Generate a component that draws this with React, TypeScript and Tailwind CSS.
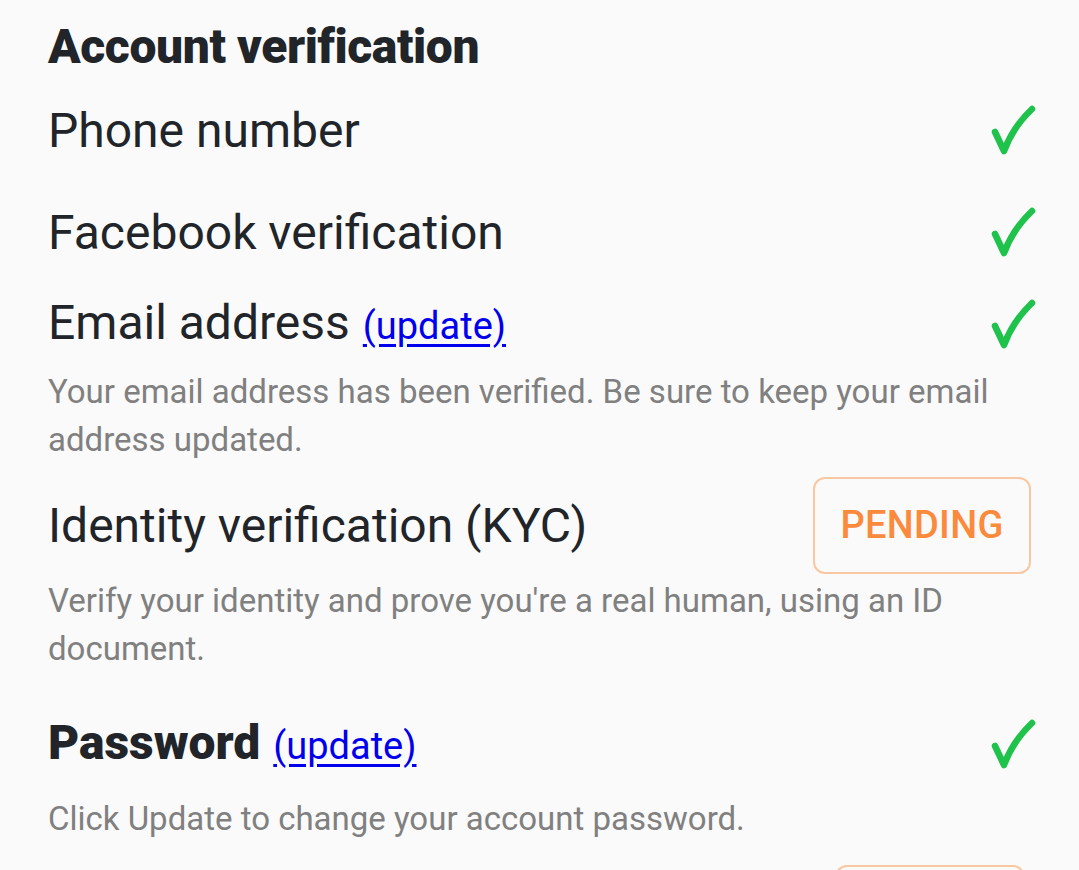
import React from 'react';

function Check() {
  return (
    <svg width="46" height="52" viewBox="0 0 46 52" className="shrink-0 -mr-[5px]">
      <path
        d="M5 27 L14 46 Q23 22 42 4"
        fill="none"
        stroke="#1fc24a"
        strokeWidth="6.5"
        strokeLinecap="round"
        strokeLinejoin="round"
      />
    </svg>
  );
}

function Pending() {
  return (
    <span className="shrink-0 w-[218px] h-[97px] flex items-center justify-center border-2 border-[#f9c7a1] rounded-[12px] text-[38px] font-medium tracking-[0.3px] text-[#fb8a3c]">
      PENDING
    </span>
  );
}

function Update() {
  return (
    <a href="#" className="ml-[13px] text-[38px] font-normal tracking-normal text-[#0000ee] underline underline-offset-[5px]">
      (update)
    </a>
  );
}

export default function App() {
  return (
    <div
      className="w-[1079px] h-[870px] overflow-hidden bg-[#fafafa] text-[#212529] px-[48px] pt-[19px]"
      style={{ fontFamily: 'Roboto, "Noto Sans", sans-serif' }}
    >
      <h1 className="text-[48px] font-black leading-[56px] tracking-[-0.4px]">Account verification</h1>

      {/* Phone */}
      <div className="mt-[26px] flex items-center justify-between">
        <span className="text-[48px] leading-[60px]">Phone number</span>
        <Check />
      </div>

      {/* Facebook */}
      <div className="mt-[42px] flex items-center justify-between">
        <span className="text-[48px] leading-[60px]">Facebook verification</span>
        <Check />
      </div>

      {/* Email */}
      <div className="mt-[30px] flex items-center justify-between">
        <span className="text-[48px] leading-[60px]">
          Email address<Update />
        </span>
        <Check />
      </div>
      <p className="mt-[12px] text-[33px] leading-[48px] text-[#808080] pr-[40px]">
        Your email address has been verified. Be sure to keep your email address updated.
      </p>

      {/* KYC */}
      <div className="mt-[13px] flex items-center justify-between">
        <span className="text-[48px] leading-[60px]">Identity verification (KYC)</span>
        <Pending />
      </div>
      <p className="mt-[3px] text-[33px] leading-[48px] text-[#808080] pr-[40px]">
        Verify your identity and prove you're a real human, using an ID document.
      </p>

      {/* Password */}
      <div className="mt-[40px] flex items-center justify-between">
        <span className="text-[48px] leading-[60px] font-black">
          Password<Update />
        </span>
        <Check />
      </div>
      <p className="mt-[19px] text-[33px] leading-[48px] text-[#808080]">
        Click Update to change your account password.
      </p>

      <div className="mt-[22px] flex justify-end pr-[6px]">
        <span className="w-[190px] h-[60px] border-2 border-[#f9c7a1] rounded-[12px]" />
      </div>
    </div>
  );
}
